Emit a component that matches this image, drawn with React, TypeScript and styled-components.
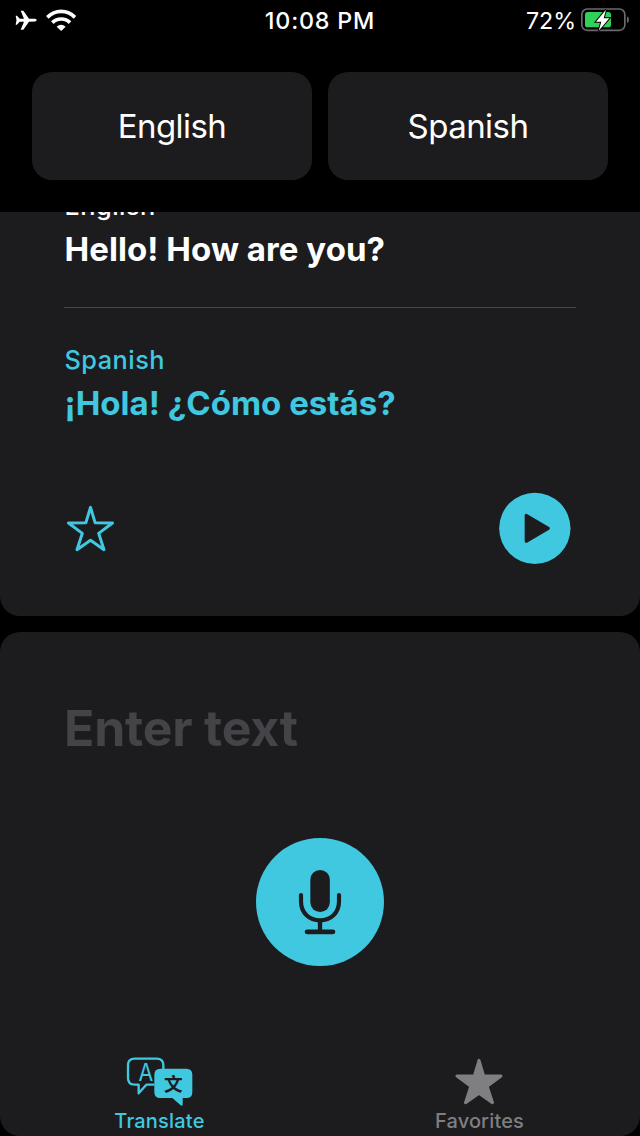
import React from "react";
import styled, { createGlobalStyle } from "styled-components";

const ACCENT = "#40c8e0";
const CARD = "#1c1c1e";

const GlobalStyle = createGlobalStyle`
  * { box-sizing: border-box; }
  body { margin: 0; background: #000; font-family: Inter, "Liberation Sans", sans-serif; font-optical-sizing: none; }
  button { font: inherit; border: 0; padding: 0; background: none; }
  svg { display: block; flex: none; }
`;

const Screen = styled.div`
  display: flex;
  flex-direction: column;
  width: 640px;
  height: 1136px;
  background: #000;
  color: #fff;
  overflow: hidden;
`;

const StatusBar = styled.header`
  display: grid;
  grid-template-columns: 1fr auto 1fr;
  align-items: center;
  height: 40px;
  padding: 0 11px;
`;

const StatusGroup = styled.div<{ $end?: boolean; $gap: number }>`
  display: flex;
  align-items: center;
  justify-content: ${(p) => (p.$end ? "flex-end" : "flex-start")};
  gap: ${(p) => p.$gap}px;
  padding-left: 4px;
`;

const StatusText = styled.span<{ $weight: number; $spacing: number }>`
  font-size: 23.3px;
  line-height: 28px;
  font-weight: ${(p) => p.$weight};
  letter-spacing: ${(p) => p.$spacing}px;
  padding-top: 1px;
`;

const LanguageBar = styled.nav`
  display: grid;
  grid-template-columns: 1fr 1fr;
  gap: 16px;
  height: 172px;
  padding: 32px 32px;
`;

const LanguageButton = styled.button<{ $spacing: number }>`
  padding-bottom: 1px;
  border-radius: 20px;
  background: ${CARD};
  color: #fff;
  font-size: 33px;
  font-weight: 400;
  letter-spacing: ${(p) => p.$spacing}px;
`;

const TranslationCard = styled.section`
  display: flex;
  flex-direction: column;
  justify-content: flex-end;
  height: 404px;
  padding: 0 64px 52px;
  border-radius: 0 0 20px 20px;
  background: ${CARD};
  overflow: hidden;

  > * {
    flex: none;
  }
`;

const Entry = styled.div<{ $accent?: boolean }>`
  display: flex;
  flex-direction: column;
  gap: 8px;
  padding-left: 0.5px;
  color: ${(p) => (p.$accent ? ACCENT : "#fff")};
`;

const EntryLanguage = styled.span<{ $spacing: number }>`
  font-size: 25.3px;
  line-height: 30px;
  font-weight: 500;
  letter-spacing: ${(p) => p.$spacing}px;
`;

const EntryText = styled.p<{ $spacing: number }>`
  margin: 0;
  font-size: 33px;
  line-height: 40px;
  font-weight: 700;
  letter-spacing: ${(p) => p.$spacing}px;
  white-space: nowrap;
`;

const Divider = styled.hr`
  width: 100%;
  height: 1px;
  margin: 38px 0 37px;
  border: 0;
  background: #464649;
`;

const Actions = styled.div`
  display: flex;
  align-items: center;
  justify-content: space-between;
  height: 72px;
  margin-top: 69px;
  padding: 0 5px 0 3px;
`;

const InputCard = styled.section`
  display: flex;
  flex-direction: column;
  align-items: stretch;
  height: 504px;
  margin-top: 16px;
  padding-top: 66px;
  border-radius: 20px;
  background: ${CARD};
`;

const Placeholder = styled.div`
  padding-left: 64px;
  font-size: 50px;
  line-height: 60px;
  font-weight: 700;
  letter-spacing: -0.2px;
  color: #434348;
`;

const MicButton = styled.button`
  display: grid;
  place-items: center;
  align-self: center;
  width: 128px;
  height: 128px;
  margin-top: 80px;
  border-radius: 50%;
  background: ${ACCENT};
`;

const TabBar = styled.nav`
  display: grid;
  grid-template-columns: 1fr 1fr;
  height: 98px;
  margin-top: auto;
`;

const Tab = styled.button<{ $active?: boolean; $spacing: number }>`
  display: flex;
  flex-direction: column;
  align-items: center;
  justify-content: flex-end;
  gap: ${(p) => (p.$active ? 3 : 4)}px;
  padding: 0 1px 3px 0;
  color: ${(p) => (p.$active ? ACCENT : "#7f7f82")};
  font-size: 20px;
  line-height: 24px;
  font-weight: 500;
  letter-spacing: ${(p) => p.$spacing}px;

  svg {
    margin-right: 2px;
  }
`;

const STAR = "M122 53 L136 99.500 L188 100 L146.500 131 L162.500 180 L122 151.500 L81.500 180 L97.500 131 L56 100 L108 99.500 Z";

const Airplane = () => (
  <svg width="22" height="22" viewBox="46 28 66 66" fill="#fff">
    <path d="M106 57 Q111 58 111 61 Q111 64.500 106 65.500 L88 66 L71 90 L63 90 L73 66 L60 66 L52 75 L48 75 L50.500 61.500 L48 48 L52 48 L60 57 L73 57 L63 33 L71 33 L88 57 Z" />
  </svg>
);

const Wifi = () => (
  <svg width="30" height="24" viewBox="139 24 90 72" fill="none" stroke="#fff" strokeWidth="11">
    <path d="M143 52 Q161 34 184.500 34 Q208 34 226 52" />
    <path d="M158 68 Q169 57 184.500 57 Q200 57 211 68" />
    <path d="M171 80 Q184 68 198 80 L184.500 93 Z" fill="#fff" stroke="none" />
  </svg>
);

const Battery = () => (
  <svg width="48" height="26" viewBox="213 21 144 78">
    <rect x="215.500" y="27" width="129" height="64" rx="16" fill="none" stroke="#6c696e" strokeWidth="5" />
    <path d="M351 49 Q357 51 357 59 Q357 67 351 69 Z" fill="#6c696e" />
    <rect x="225" y="36" width="78" height="46" rx="8" fill="#30d158" />
    <path d="M288 29 L258 65 L274 65 L266 92 L298 55 L281 55 Z" fill="#fff" stroke="#000" strokeWidth="6" paintOrder="stroke" />
  </svg>
);

const StarOutline = () => (
  <svg width="47" height="47" viewBox="51.500 46 141 141" fill="none" stroke={ACCENT} strokeWidth="9" strokeLinejoin="round">
    <path d={STAR} />
  </svg>
);

const StarFilled = () => (
  <svg width="48" height="47" viewBox="50 46 144 141" fill="currentColor" stroke="currentColor" strokeWidth="9" strokeLinejoin="round">
    <path d={STAR} />
  </svg>
);

const Play = () => (
  <svg width="72" height="72" viewBox="56 36 216 216">
    <circle cx="163.500" cy="145" r="107" fill={ACCENT} />
    <path d="M137.500 106 L137.500 184 L204 145 Z" fill={CARD} stroke={CARD} strokeWidth="9" strokeLinejoin="round" />
  </svg>
);

const Microphone = () => (
  <svg width="128" height="128" viewBox="48 54 384 384" fill="none" stroke={CARD} strokeLinecap="round">
    <rect x="211" y="150" width="58.500" height="126" rx="29" fill={CARD} stroke="none" />
    <path d="M183 225 V244 C183 280 208 301 240 301 C272 301 297 280 297 244 V225" strokeWidth="12.500" />
    <path d="M240 301 V335" strokeWidth="13" strokeLinecap="butt" />
    <path d="M201 335.500 H279" strokeWidth="14" />
  </svg>
);

const TranslateIcon = () => (
  <svg width="68" height="50" viewBox="75 49 204 150">
    <path
      d="M163 135 H139 L116 161 V135 H104 Q84 135 84 115 V77 Q84 57 104 57 H170 Q190 57 190 77 V89"
      fill="none"
      stroke={ACCENT}
      strokeWidth="7"
      strokeLinejoin="round"
    />
    <path
      d="M181 87 H259 Q277 87 277 105 V157 Q277 175 259 175 H248 V194 Q248 201 242 197 L217 175 H181 Q163 175 163 157 V105 Q163 87 181 87 Z"
      fill={ACCENT}
    />
    <text transform="translate(137.500 125) scale(0.9 1)" textAnchor="middle" fontFamily="Inter, sans-serif" fontSize="71" fontWeight="400" letterSpacing="0" fill={ACCENT}>A</text>
    <text x="220" y="154.500" textAnchor="middle" fontFamily="'Noto Sans CJK SC', sans-serif" fontSize="56" fontWeight="700" letterSpacing="0" fill={CARD}>文</text>
  </svg>
);

export default function App() {
  return (
    <>
      <GlobalStyle />
      <Screen>
        <StatusBar>
          <StatusGroup $gap={9}>
            <Airplane />
            <Wifi />
          </StatusGroup>
          <StatusText $weight={500} $spacing={0.8}>10:08 PM</StatusText>
          <StatusGroup $end $gap={5}>
            <StatusText $weight={400} $spacing={-0.1}>72%</StatusText>
            <Battery />
          </StatusGroup>
        </StatusBar>
        <LanguageBar>
          <LanguageButton $spacing={-0.55}>English</LanguageButton>
          <LanguageButton $spacing={-0.55}>Spanish</LanguageButton>
        </LanguageBar>
        <TranslationCard>
          <Entry>
            <EntryLanguage $spacing={0.5}>English</EntryLanguage>
            <EntryText $spacing={0.06}>Hello! How are you?</EntryText>
          </Entry>
          <Divider />
          <Entry $accent>
            <EntryLanguage $spacing={0.5}>Spanish</EntryLanguage>
            <EntryText $spacing={0.02}>¡Hola! ¿Cómo estás?</EntryText>
          </Entry>
          <Actions>
            <StarOutline />
            <Play />
          </Actions>
        </TranslationCard>
        <InputCard>
          <Placeholder>Enter text</Placeholder>
          <MicButton aria-label="Speak">
            <Microphone />
          </MicButton>
          <TabBar>
            <Tab $active $spacing={0.2}>
              <TranslateIcon />
              Translate
            </Tab>
            <Tab $spacing={0.15}>
              <StarFilled />
              Favorites
            </Tab>
          </TabBar>
        </InputCard>
      </Screen>
    </>
  );
}
